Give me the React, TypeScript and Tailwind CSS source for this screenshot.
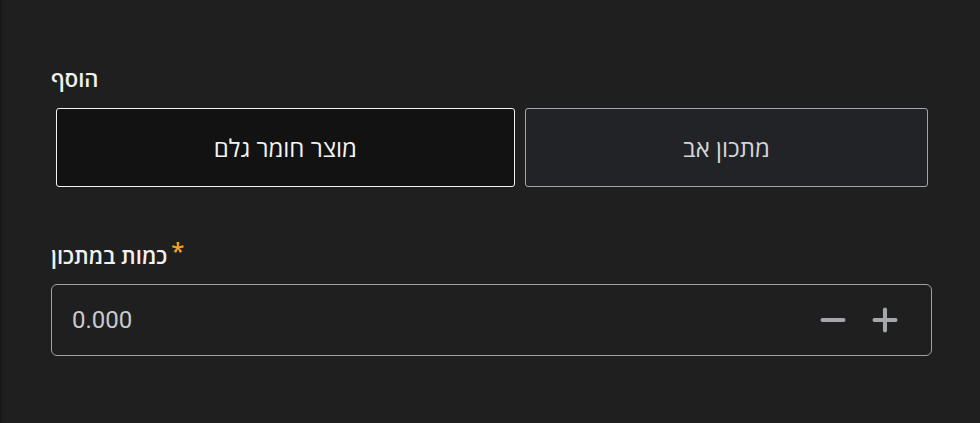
import { Minus, Plus } from 'lucide-react'

const font = { fontFamily: 'Roboto, "Noto Sans", "Open Sans", sans-serif' }
const hebrew = { fontFamily: '"Noto Sans", "Open Sans", sans-serif' }

export default function App() {
  return (
    <div
      className="w-[980px] h-[423px] bg-[#1f1f1f] border-l-2 border-[#191919] pl-[49px] pr-[48px] pt-[64px] text-white"
      style={font}
    >
      {/* Add type */}
      <div className="text-[22px] leading-[28px] font-semibold text-[#f2f2f2]" style={hebrew}>
        הוסף
      </div>
      <div className="mt-[16px] flex gap-[10px] pl-[5px] pr-[4px]">
        <button
          className="flex-[459] h-[79px] rounded-[3px] border-[1.5px] border-[#f4f4f4] bg-[#121212] text-[24px] font-medium text-[#f4f4f4]"
          style={hebrew}
        >
          מוצר חומר גלם
        </button>
        <button
          className="flex-[403] h-[79px] rounded-[3px] border-[1.5px] border-[#a3a7ad] bg-[#222327] text-[24px] font-medium text-[#d4d5d8]"
          style={hebrew}
        >
          מתכון אב
        </button>
      </div>

      {/* Quantity */}
      <div className="mt-[54px] flex items-start text-[22px] leading-[28px] font-semibold text-[#f2f2f2]" style={hebrew}>
        <span>כמות במתכון</span>
        <span className="ml-[4px] -mt-[4px] text-[24px] font-medium text-[#f5a524]">*</span>
      </div>
      <div className="mt-[15px] h-[72px] rounded-[6px] border-[1.5px] border-[#9ea2a8] flex items-center pl-[20px] pr-[28px]">
        <span className="flex-1 text-[24px] text-[#c9cacd]">0.000</span>
        <div className="flex items-center gap-[16px] text-[#a3a7ad]">
          <Minus size={36} strokeWidth={2.7} />
          <Plus size={36} strokeWidth={2.7} />
        </div>
      </div>
    </div>
  )
}
